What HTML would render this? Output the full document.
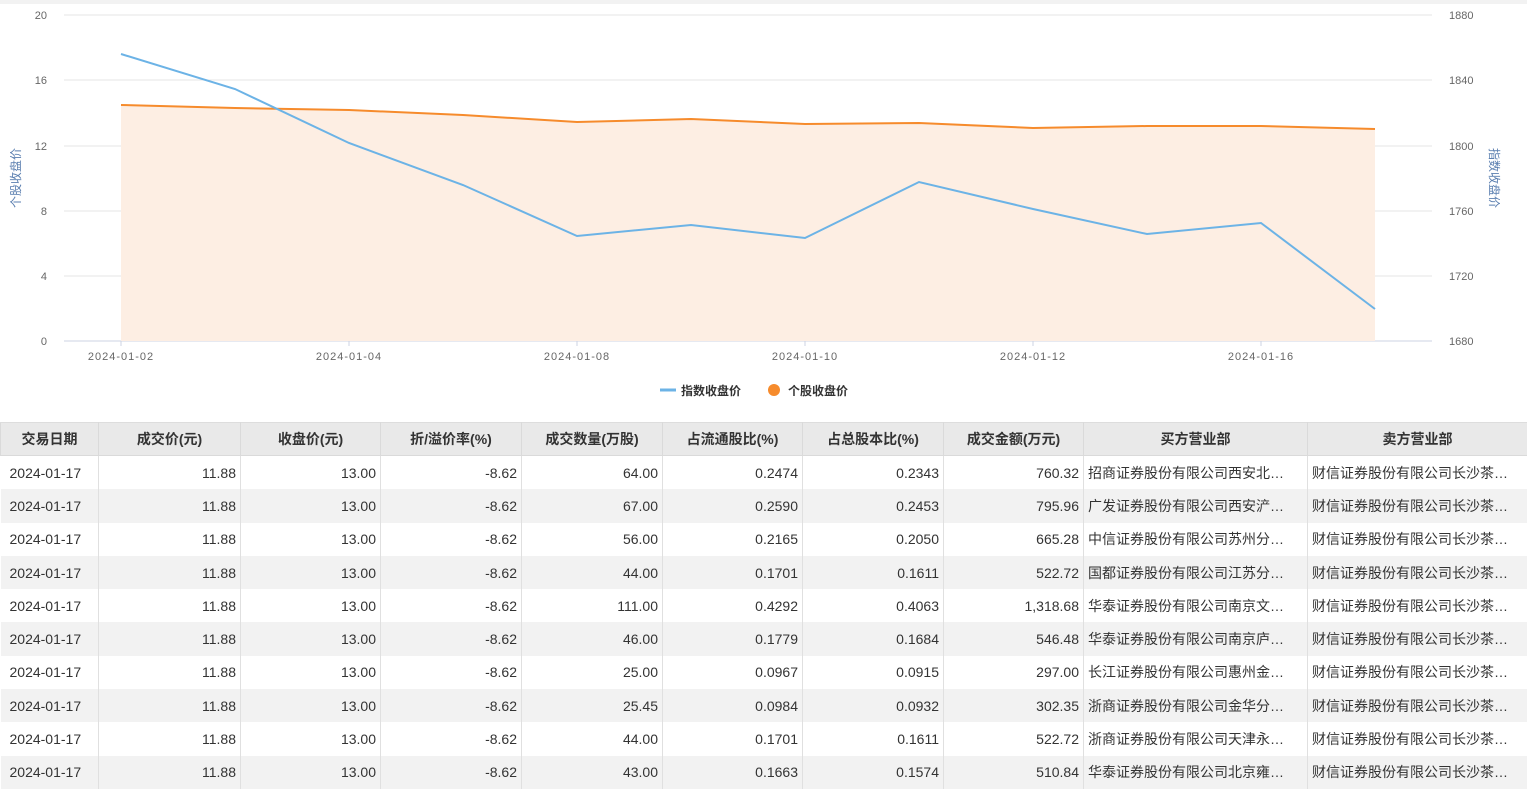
<!DOCTYPE html><html><head><meta charset="utf-8"><style>
body{margin:0;width:1527px;height:787px;overflow:hidden;background:#fff;font-family:"Liberation Sans","Noto Sans CJK SC",sans-serif}
table{position:absolute;left:0;top:422px;border-collapse:collapse;table-layout:fixed;width:1527px;font-size:14px;color:#333}
th{background:#e9e9e9;height:32px;font-weight:bold;border:1px solid #dadada;border-top:1px solid #ddd;padding:0}
td{height:33.3px;border-right:1px solid #e0e0e0;padding:0 4px;white-space:nowrap;overflow:hidden;text-overflow:ellipsis;text-align:right}
td:first-child{text-align:left;padding-left:9px}
td.l{text-align:left;padding-right:12px}
tr:nth-child(odd) td{background:#f2f2f2}
</style></head><body>
<div style="position:absolute;left:0;top:0;width:1527px;height:4px;background:#f2f2f2"></div>
<svg width="1527" height="420" style="position:absolute;left:0;top:0" font-family="Liberation Sans,sans-serif" font-size="11" fill="#666">
<g stroke="#e6e6e6"><line x1="64" x2="1432" y1="15" y2="15"/><line x1="64" x2="1432" y1="80" y2="80"/><line x1="64" x2="1432" y1="146" y2="146"/><line x1="64" x2="1432" y1="211" y2="211"/><line x1="64" x2="1432" y1="276" y2="276"/></g>
<line x1="64" x2="1432" y1="341" y2="341" stroke="#ccd3e3"/>
<g stroke="#ccd3e3"><line x1="121" x2="121" y1="341" y2="346"/><line x1="349" x2="349" y1="341" y2="346"/><line x1="577" x2="577" y1="341" y2="346"/><line x1="805" x2="805" y1="341" y2="346"/><line x1="1033" x2="1033" y1="341" y2="346"/><line x1="1261" x2="1261" y1="341" y2="346"/></g>
<g text-anchor="end"><text x="47" y="19">20</text><text x="47" y="84">16</text><text x="47" y="150">12</text><text x="47" y="215">8</text><text x="47" y="280">4</text><text x="47" y="345">0</text></g>
<g><text x="1449" y="19">1880</text><text x="1449" y="84">1840</text><text x="1449" y="150">1800</text><text x="1449" y="215">1760</text><text x="1449" y="280">1720</text><text x="1449" y="345">1680</text></g>
<g text-anchor="middle" letter-spacing="1"><text x="121" y="360">2024-01-02</text><text x="349" y="360">2024-01-04</text><text x="577" y="360">2024-01-08</text><text x="805" y="360">2024-01-10</text><text x="1033" y="360">2024-01-12</text><text x="1261" y="360">2024-01-16</text></g>
<text transform="translate(20,178) rotate(-90)" text-anchor="middle" font-size="12" fill="#5b7fb0" font-family="Noto Sans CJK SC,sans-serif">个股收盘价</text>
<text transform="translate(1490,178) rotate(90)" text-anchor="middle" font-size="12" fill="#5b7fb0" font-family="Noto Sans CJK SC,sans-serif">指数收盘价</text>
<path d="M121,105 L235,108 349,110 463,115 577,122 691,119 805,124 919,123 1033,128 1147,126 1261,126 1375,129 L1375,341 L121,341Z" fill="#fdeee3"/>
<polyline points="121,105 235,108 349,110 463,115 577,122 691,119 805,124 919,123 1033,128 1147,126 1261,126 1375,129" fill="none" stroke="#f68b2c" stroke-width="2"/>
<polyline points="121,54 235,89 349,143 463,185 577,236 691,225 805,238 919,182 1033,209 1147,234 1261,223 1375,309" fill="none" stroke="#6cb3e6" stroke-width="2"/>
<line x1="660" x2="676" y1="390" y2="390" stroke="#6cb3e6" stroke-width="3"/>
<text x="681" y="395" font-size="12" font-weight="bold" fill="#333" font-family="Noto Sans CJK SC,sans-serif">指数收盘价</text>
<circle cx="774" cy="390" r="6" fill="#f68b2c"/>
<text x="788" y="395" font-size="12" font-weight="bold" fill="#333" font-family="Noto Sans CJK SC,sans-serif">个股收盘价</text>
</svg>
<table>
<colgroup><col style="width:98px"><col style="width:142px"><col style="width:140px"><col style="width:141px"><col style="width:141px"><col style="width:140px"><col style="width:141px"><col style="width:140px"><col style="width:224px"><col style="width:220px"></colgroup>
<tr><th>交易日期</th><th>成交价(元)</th><th>收盘价(元)</th><th>折/溢价率(%)</th><th>成交数量(万股)</th><th>占流通股比(%)</th><th>占总股本比(%)</th><th>成交金额(万元)</th><th>买方营业部</th><th>卖方营业部</th></tr>
<tr><td>2024-01-17</td><td>11.88</td><td>13.00</td><td>-8.62</td><td>64.00</td><td>0.2474</td><td>0.2343</td><td>760.32</td><td class="l">招商证券股份有限公司西安北大街证券营业部</td><td class="l">财信证券股份有限公司长沙茶子山路证券营业部</td></tr>
<tr><td>2024-01-17</td><td>11.88</td><td>13.00</td><td>-8.62</td><td>67.00</td><td>0.2590</td><td>0.2453</td><td>795.96</td><td class="l">广发证券股份有限公司西安浐灞证券营业部</td><td class="l">财信证券股份有限公司长沙茶子山路证券营业部</td></tr>
<tr><td>2024-01-17</td><td>11.88</td><td>13.00</td><td>-8.62</td><td>56.00</td><td>0.2165</td><td>0.2050</td><td>665.28</td><td class="l">中信证券股份有限公司苏州分公司营业部</td><td class="l">财信证券股份有限公司长沙茶子山路证券营业部</td></tr>
<tr><td>2024-01-17</td><td>11.88</td><td>13.00</td><td>-8.62</td><td>44.00</td><td>0.1701</td><td>0.1611</td><td>522.72</td><td class="l">国都证券股份有限公司江苏分公司营业部</td><td class="l">财信证券股份有限公司长沙茶子山路证券营业部</td></tr>
<tr><td>2024-01-17</td><td>11.88</td><td>13.00</td><td>-8.62</td><td>111.00</td><td>0.4292</td><td>0.4063</td><td>1,318.68</td><td class="l">华泰证券股份有限公司南京文澜路证券营业部</td><td class="l">财信证券股份有限公司长沙茶子山路证券营业部</td></tr>
<tr><td>2024-01-17</td><td>11.88</td><td>13.00</td><td>-8.62</td><td>46.00</td><td>0.1779</td><td>0.1684</td><td>546.48</td><td class="l">华泰证券股份有限公司南京庐山路证券营业部</td><td class="l">财信证券股份有限公司长沙茶子山路证券营业部</td></tr>
<tr><td>2024-01-17</td><td>11.88</td><td>13.00</td><td>-8.62</td><td>25.00</td><td>0.0967</td><td>0.0915</td><td>297.00</td><td class="l">长江证券股份有限公司惠州金山湖证券营业部</td><td class="l">财信证券股份有限公司长沙茶子山路证券营业部</td></tr>
<tr><td>2024-01-17</td><td>11.88</td><td>13.00</td><td>-8.62</td><td>25.45</td><td>0.0984</td><td>0.0932</td><td>302.35</td><td class="l">浙商证券股份有限公司金华分公司营业部</td><td class="l">财信证券股份有限公司长沙茶子山路证券营业部</td></tr>
<tr><td>2024-01-17</td><td>11.88</td><td>13.00</td><td>-8.62</td><td>44.00</td><td>0.1701</td><td>0.1611</td><td>522.72</td><td class="l">浙商证券股份有限公司天津永安道证券营业部</td><td class="l">财信证券股份有限公司长沙茶子山路证券营业部</td></tr>
<tr><td>2024-01-17</td><td>11.88</td><td>13.00</td><td>-8.62</td><td>43.00</td><td>0.1663</td><td>0.1574</td><td>510.84</td><td class="l">华泰证券股份有限公司北京雍和宫证券营业部</td><td class="l">财信证券股份有限公司长沙茶子山路证券营业部</td></tr>
</table>
</body></html>
